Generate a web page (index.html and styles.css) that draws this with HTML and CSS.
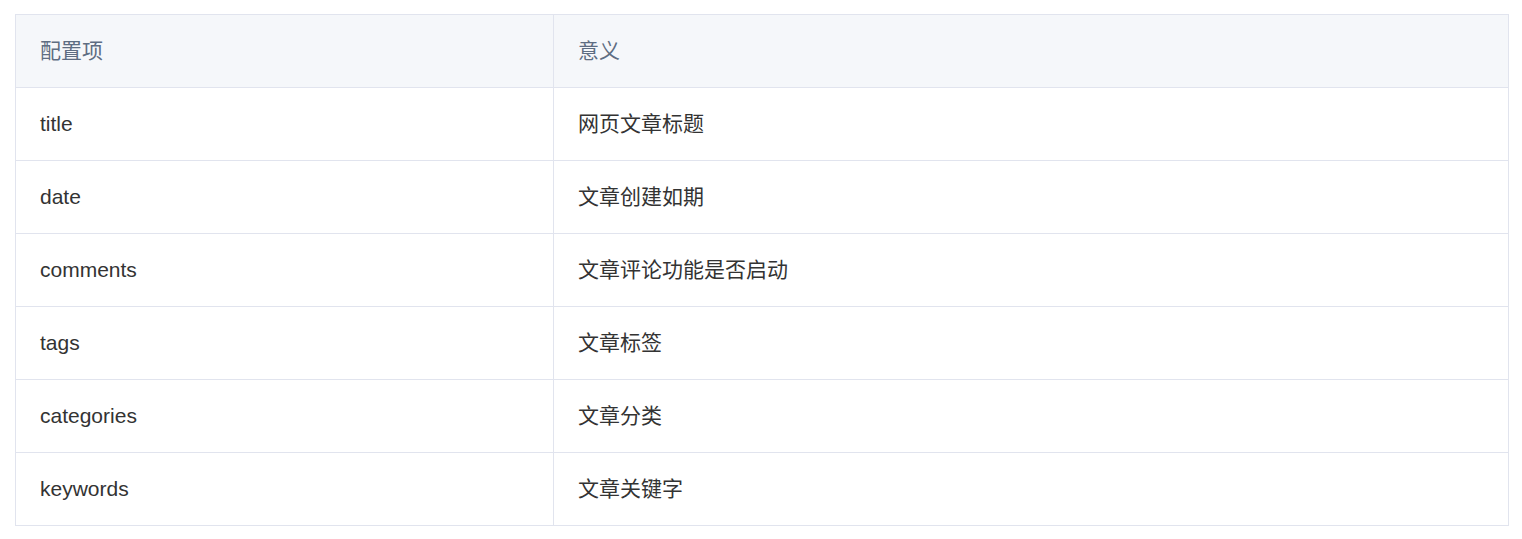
FILE: index.html
```html
<!DOCTYPE html>
<html lang="zh-CN">
<head>
<meta charset="utf-8">
<link rel="stylesheet" href="styles.css">
</head>
<body>
<table class="cfg">
  <thead>
    <tr><th class="c1 cn">配置项</th><th class="cn">意义</th></tr>
  </thead>
  <tbody>
    <tr><td>title</td><td class="cn">网页文章标题</td></tr>
    <tr><td>date</td><td class="cn">文章创建如期</td></tr>
    <tr><td>comments</td><td class="cn">文章评论功能是否启动</td></tr>
    <tr><td>tags</td><td class="cn">文章标签</td></tr>
    <tr><td>categories</td><td class="cn">文章分类</td></tr>
    <tr><td>keywords</td><td class="cn">文章关键字</td></tr>
  </tbody>
</table>
</body>
</html>
```
FILE: styles.css
```css
html, body { margin: 0; padding: 0; background: #fff; }
body { padding: 14px 13px 0 15px; font-family: "Liberation Sans", Arial, "Noto Sans CJK SC", sans-serif; }
.cfg {
  width: 1494px;
  border-collapse: collapse;
  font-size: 21px;
  color: #333;
}
.cfg th, .cfg td {
  border: 1px solid #e1e4ee;
  height: 73px;
  padding: 0 24px;
  text-align: left;
  font-weight: normal;
  box-sizing: border-box;
}
.cfg .cn { padding-bottom: 5px; }
.cfg th { background: #f5f7fa; color: #5e6d82; }
.cfg .c1 { width: 538px; }
```
